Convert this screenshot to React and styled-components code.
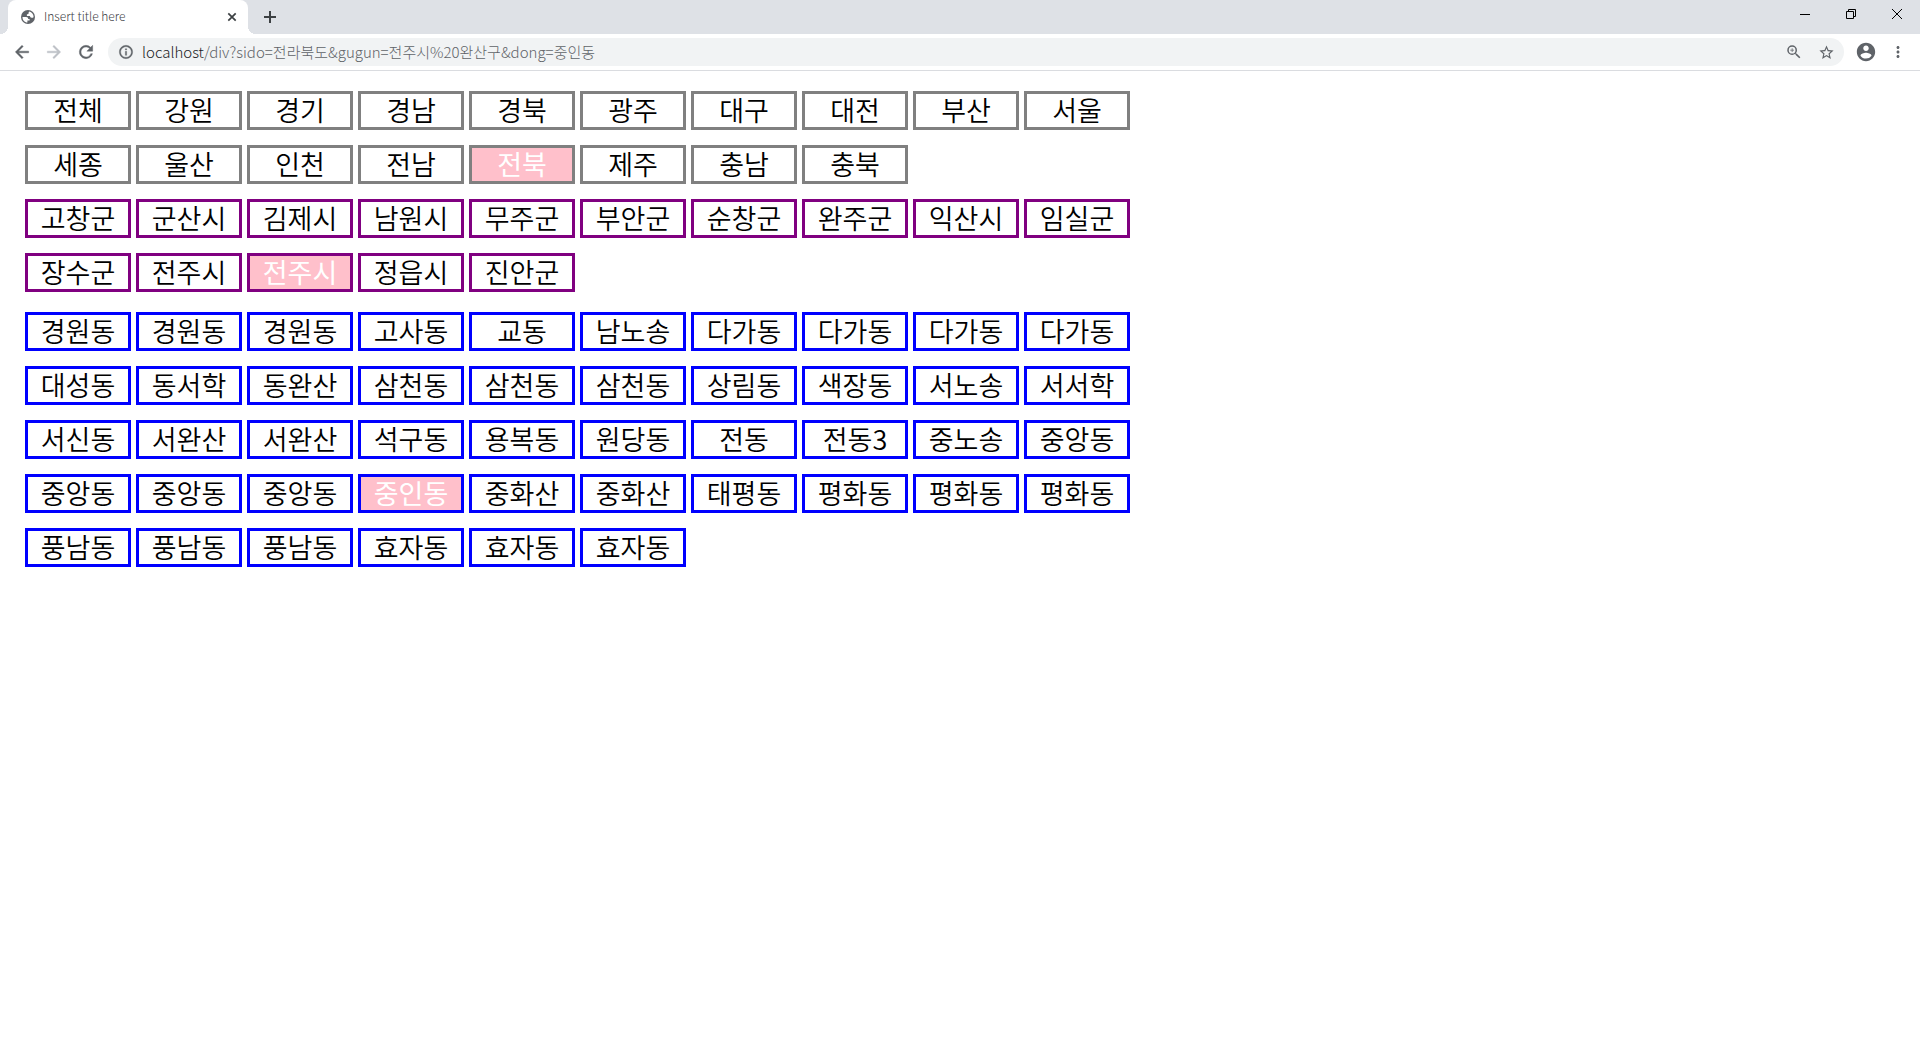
import React, { useState } from "react";
import styled, { createGlobalStyle } from "styled-components";

const GlobalStyle = createGlobalStyle`
  *, *::before, *::after { box-sizing: border-box; }
  body {
    margin: 0;
    background: #fff;
    font-family: "Noto Sans CJK KR", "Noto Sans", sans-serif;
  }
  button { border: 0; padding: 0; background: none; font: inherit; color: inherit; }
`;

const TabStrip = styled.header`
  display: flex;
  align-items: stretch;
  height: 34px;
  padding-left: 8px;
  background: #dee1e6;
`;

const Tab = styled.div`
  position: relative;
  display: flex;
  align-items: center;
  gap: 8px;
  width: 240px;
  padding: 0 8px 0 12px;
  border-radius: 8px 8px 0 0;
  background: #fff;
  color: #3c4043;

  &::before,
  &::after {
    content: "";
    position: absolute;
    bottom: 0;
    width: 8px;
    height: 8px;
  }
  &::before {
    right: 100%;
    background: radial-gradient(circle at 0 0, transparent 8px, #fff 8px);
  }
  &::after {
    left: 100%;
    background: radial-gradient(circle at 100% 0, transparent 8px, #fff 8px);
  }
`;

const TabTitle = styled.span`
  flex: 1;
  padding-bottom: 2px;
  font-size: 12px;
  font-weight: 300;
  line-height: 16px;
`;

const IconButton = styled.button`
  display: grid;
  place-items: center;
  width: ${(p) => p.$w}px;
  height: ${(p) => p.$h || p.$w}px;
  flex: none;
  color: ${(p) => p.$color || "#5f6368"};
`;

const NewTab = styled(IconButton)`
  align-self: center;
  margin-left: 8px;
`;

const WindowControls = styled.div`
  display: flex;
  margin-left: auto;
`;

const Toolbar = styled.nav`
  display: flex;
  align-items: center;
  height: 37px;
  padding: 0 6px;
  border-bottom: 1px solid #dadce0;
  background: #fff;
`;

const AddressBar = styled.form`
  display: flex;
  align-items: center;
  flex: 1;
  height: 28px;
  margin: 0 6px;
  padding: 0 2px 0 10px;
  border-radius: 14px;
  background: #f1f3f4;
  font-size: 15px;
  font-weight: 300;
  line-height: 20px;
`;

const Host = styled.label`
  margin-left: 8px;
  color: #202124;
`;

const UrlInput = styled.input`
  flex: 1;
  min-width: 0;
  padding: 0;
  border: 0;
  outline: 0;
  background: transparent;
  font: inherit;
  color: #5f6368;
`;

const Page = styled.main`
  display: flex;
  flex-direction: column;
  gap: 20px;
  max-width: 1155px;
  padding: 20px 25px;
`;

const Levels = styled.div`
  display: flex;
  flex-direction: column;
  gap: 15px;
`;

const Group = styled.section`
  display: flex;
  flex-wrap: wrap;
  gap: 15px 5px;
`;

const Region = styled.a`
  width: 106px;
  height: 39px;
  border: 3px solid ${(p) => p.$border};
  background: ${(p) => (p.$active ? "pink" : "#fff")};
  color: ${(p) => (p.$active ? "#fff" : "#000")};
  font-size: 27px;
  font-weight: ${(p) => (p.$active ? 400 : 350)};
  line-height: 31px;
  text-align: center;
  text-decoration: none;
  white-space: nowrap;
`;

const Icon = ({ size, children, box = 24, ...rest }) => (
  <svg width={size} height={size} viewBox={`0 0 ${box} ${box}`} fill="currentColor" aria-hidden="true" {...rest}>
    {children}
  </svg>
);

const sido = "전체 강원 경기 경남 경북 광주 대구 대전 부산 서울 세종 울산 인천 전남 전북 제주 충남 충북".split(" ");
const gugun = "고창군 군산시 김제시 남원시 무주군 부안군 순창군 완주군 익산시 임실군 장수군 전주시 전주시 정읍시 진안군".split(" ");
const dong = (
  "경원동 경원동 경원동 고사동 교동 남노송 다가동 다가동 다가동 다가동 " +
  "대성동 동서학 동완산 삼천동 삼천동 삼천동 상림동 색장동 서노송 서서학 " +
  "서신동 서완산 서완산 석구동 용복동 원당동 전동 전동3 중노송 중앙동 " +
  "중앙동 중앙동 중앙동 중인동 중화산 중화산 태평동 평화동 평화동 평화동 " +
  "풍남동 풍남동 풍남동 효자동 효자동 효자동"
).split(" ");

function RegionGroup({ label, names, border, selected }) {
  return (
    <Group aria-label={label}>
      {names.map((name, i) => (
        <Region
          key={i}
          href="#"
          $border={border}
          $active={i === selected}
          aria-current={i === selected ? "true" : undefined}
        >
          {name}
        </Region>
      ))}
    </Group>
  );
}

export default function App() {
  const [path, setPath] = useState("/div?sido=전라북도&gugun=전주시%20완산구&dong=중인동");
  return (
    <>
      <GlobalStyle />
      <TabStrip>
        <Tab>
          <Icon size={16} box={16} color="#5f6368">
            <circle cx="8" cy="8" r="7" />
            <path
              fill="#fff"
              d="M2.500 8h3.600c1.500 0 2.100.8 2.100 1.900h1.400v1.700H7.400v2c-2.800-.2-5-2.500-4.900-5.600zM9.400 2.600c2.400.6 4.200 2.800 4.200 5.300-.5.700-1.100.8-1.900.8-1.200 0-1.600-.6-1.700-1.700H6.900V5.200c1.200 0 1.700-.3 1.700-1.300 0-.6.2-1.100.8-1.300z"
            />
          </Icon>
          <TabTitle>Insert title here</TabTitle>
          <IconButton $w={16} $color="#3c4043" aria-label="Close tab">
            <Icon size={16} box={16} stroke="currentColor" strokeWidth="1.700">
              <path d="M4.300 4.300l7.400 7.400M11.700 4.300l-7.400 7.400" />
            </Icon>
          </IconButton>
        </Tab>
        <NewTab $w={28} $color="#3c4043" aria-label="New tab">
          <Icon size={12} box={12} stroke="currentColor" strokeWidth="2">
            <path d="M6 0v12M0 6h12" />
          </Icon>
        </NewTab>
        <WindowControls>
          <IconButton $w={46} $h={28} $color="#000" aria-label="Minimize">
            <Icon size={10} box={10}>
              <path d="M0 5h10v1H0z" />
            </Icon>
          </IconButton>
          <IconButton $w={46} $h={28} $color="#000" aria-label="Restore">
            <Icon size={10} box={10} fill="none" stroke="currentColor">
              <path d="M.5 2.500h7v7h-7zM2.500 2.500v-2h7v7h-2" />
            </Icon>
          </IconButton>
          <IconButton $w={46} $h={28} $color="#000" aria-label="Close window">
            <Icon size={10} box={10} stroke="currentColor">
              <path d="M0 0l10 10M10 0L0 10" />
            </Icon>
          </IconButton>
        </WindowControls>
      </TabStrip>
      <Toolbar>
        <IconButton $w={32} aria-label="Back">
          <Icon size={20}>
            <path d="M20 11H7.830l5.590-5.590L12 4l-8 8 8 8 1.410-1.410L7.830 13H20v-2z" stroke="currentColor" strokeWidth=".5" />
          </Icon>
        </IconButton>
        <IconButton $w={32} $color="#bdc1c6" aria-label="Forward">
          <Icon size={20}>
            <path d="M12 4l-1.410 1.410L16.170 11H4v2h12.170l-5.580 5.590L12 20l8-8z" stroke="currentColor" strokeWidth=".5" />
          </Icon>
        </IconButton>
        <IconButton $w={32} aria-label="Reload">
          <Icon size={20}>
            <path d="M17.650 6.350A7.958 7.958 0 0 0 12 4a8 8 0 1 0 7.730 10h-2.080A5.990 5.990 0 0 1 12 18a6 6 0 1 1 0-12c1.660 0 3.140.69 4.220 1.780L13 11h7V4l-2.350 2.350z" stroke="currentColor" strokeWidth=".5" />
          </Icon>
        </IconButton>
        <AddressBar onSubmit={(e) => e.preventDefault()}>
          <Icon size={16} color="#5f6368">
            <path d="M11 17h2v-6h-2v6zm1-15C6.480 2 2 6.480 2 12s4.480 10 10 10 10-4.480 10-10S17.520 2 12 2zm0 18c-4.410 0-8-3.590-8-8s3.590-8 8-8 8 3.590 8 8-3.590 8-8 8zM11 9h2V7h-2v2z" stroke="currentColor" strokeWidth=".5" />
          </Icon>
          <Host htmlFor="url">localhost</Host>
          <UrlInput id="url" value={path} onChange={(e) => setPath(e.target.value)} spellCheck={false} />
          <IconButton type="button" $w={32} $h={28} aria-label="Zoom">
            <Icon size={18}>
              <path d="M15.500 14h-.79l-.28-.27A6.471 6.471 0 0 0 16 9.500 6.500 6.500 0 1 0 9.500 16c1.610 0 3.090-.59 4.230-1.570l.27.28v.79l5 4.990L20.490 19l-4.990-5zm-6 0a4.500 4.500 0 1 1 0-9 4.500 4.500 0 0 1 0 9zM10 7H9v2H7v1h2v2h1v-2h2V9h-2z" />
            </Icon>
          </IconButton>
          <IconButton type="button" $w={32} $h={28} aria-label="Bookmark this page">
            <Icon size={17}>
              <path d="M22 9.240l-7.190-.62L12 2 9.190 8.630 2 9.240l5.460 4.730L5.820 21 12 17.270 18.180 21l-1.630-7.030L22 9.240zM12 15.400l-3.760 2.270 1-4.280-3.320-2.880 4.380-.38L12 6.100l1.710 4.040 4.380.38-3.320 2.880 1 4.280L12 15.400z" />
            </Icon>
          </IconButton>
        </AddressBar>
        <IconButton $w={32} $h={28} aria-label="Profile">
          <Icon size={22}>
            <path d="M12 2C6.480 2 2 6.480 2 12s4.480 10 10 10 10-4.480 10-10S17.520 2 12 2zm0 3c1.660 0 3 1.340 3 3s-1.340 3-3 3-3-1.340-3-3 1.340-3 3-3zm0 14.200a7.200 7.200 0 0 1-6-3.220c.03-1.990 4-3.080 6-3.080 1.990 0 5.970 1.090 6 3.080a7.200 7.200 0 0 1-6 3.220z" />
          </Icon>
        </IconButton>
        <IconButton $w={32} $h={28} aria-label="Menu">
          <Icon size={18}>
            <path d="M12 8c1.100 0 2-.9 2-2s-.9-2-2-2-2 .9-2 2 .9 2 2 2zm0 2c-1.100 0-2 .9-2 2s.9 2 2 2 2-.9 2-2-.9-2-2-2zm0 6c-1.100 0-2 .9-2 2s.9 2 2 2 2-.9 2-2-.9-2-2-2z" />
          </Icon>
        </IconButton>
      </Toolbar>
      <Page>
        <Levels>
          <RegionGroup label="시도" names={sido} border="gray" selected={14} />
          <RegionGroup label="구군" names={gugun} border="purple" selected={12} />
        </Levels>
        <RegionGroup label="동" names={dong} border="blue" selected={33} />
      </Page>
    </>
  );
}
